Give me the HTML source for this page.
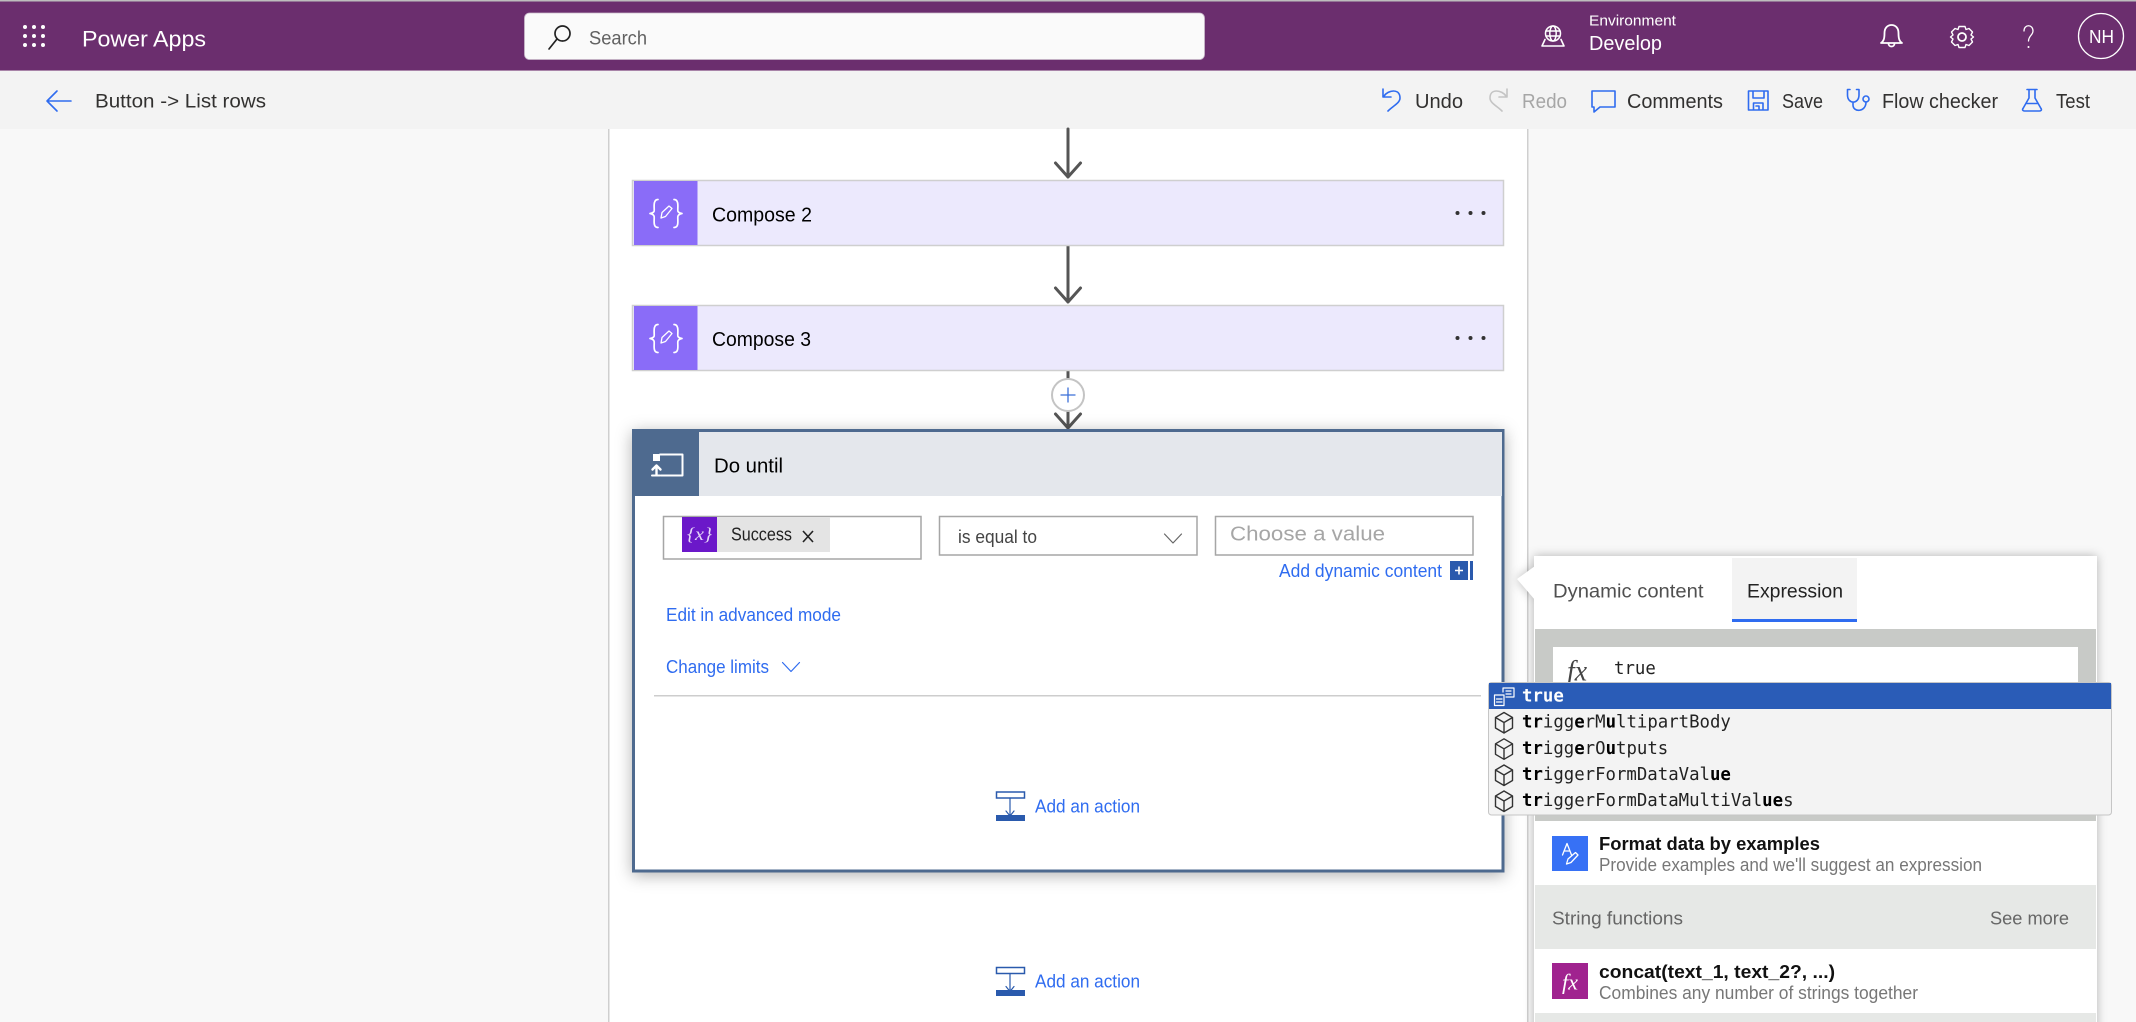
<!DOCTYPE html>
<html lang="en">
<head>
<meta charset="utf-8">
<title>Button -&gt; List rows</title>
<style>
html,body{margin:0;padding:0;width:2136px;height:1022px;overflow:hidden;background:#f8f8f8}
svg{display:block}
text{font-family:"Liberation Sans",sans-serif;dominant-baseline:central}
text.s{font-family:"Liberation Serif",serif;font-style:italic}
text.m{font-family:"DejaVu Sans Mono","Liberation Mono",monospace;font-size:17.35px;fill:#222}
.m tspan{font-weight:bold;fill:#000}
.ln{fill:none;stroke-linecap:round;stroke-linejoin:round}
</style>
</head>
<body>
<svg xmlns="http://www.w3.org/2000/svg" width="2136" height="1022" viewBox="0 0 2136 1022">
<!-- page -->
<rect width="2136" height="1022" fill="#f8f8f8"/>
<!-- canvas -->
<rect x="608" y="129" width="920" height="893" fill="#fff"/>
<rect x="608" y="129" width="1.5" height="893" fill="#cfcfcf"/>
<rect x="1527" y="129" width="1.5" height="893" fill="#cfcfcf"/>
<!-- header -->
<rect width="2136" height="71" fill="#6b2e6e"/>
<rect width="2136" height="1.5" fill="#bdbdbd"/>
<rect y="70" width="2136" height="1" fill="#a884a8"/>
<g fill="#fff">
<circle cx="25" cy="27" r="2"/><circle cx="34" cy="27" r="2"/><circle cx="43" cy="27" r="2"/>
<circle cx="25" cy="36" r="2"/><circle cx="34" cy="36" r="2"/><circle cx="43" cy="36" r="2"/>
<circle cx="25" cy="45" r="2"/><circle cx="34" cy="45" r="2"/><circle cx="43" cy="45" r="2"/>
</g>
<text x="82" y="39" font-size="22" fill="#fff" textLength="124" lengthAdjust="spacingAndGlyphs">Power Apps</text>
<rect x="524.500" y="13" width="680" height="46.500" rx="5" fill="#fafafa" stroke="#c9b9ca" stroke-width=".8"/>
<g class="ln" stroke="#222" stroke-width="1.700"><circle cx="562.500" cy="33.500" r="7.500"/><path d="M557 39L549 49"/></g>
<text x="589" y="39" font-size="19" fill="#616161" textLength="58" lengthAdjust="spacingAndGlyphs">Search</text>
<!-- environment -->
<g class="ln" stroke="#fff" stroke-width="1.500">
<circle cx="1553" cy="33.500" r="7.500"/><ellipse cx="1553" cy="33.500" rx="3.200" ry="7.500"/><path d="M1546 31H1560M1546 36H1560"/>
<path d="M1545 39.500L1542 46H1564L1561 39.500" stroke-width="1.600"/>
</g>
<text x="1589" y="21" font-size="15" fill="#fff" textLength="87" lengthAdjust="spacingAndGlyphs">Environment</text>
<text x="1589" y="44" font-size="20" fill="#fff" textLength="73" lengthAdjust="spacingAndGlyphs">Develop</text>
<g class="ln" stroke="#fff" stroke-width="1.800">
<path d="M1881 43C1884 41 1884.500 38 1884.500 33C1884.500 28 1887.500 25 1891.500 25C1895.500 25 1898.500 28 1898.500 33C1898.500 38 1899 41 1902 43Z"/><path d="M1888.500 43.500C1888.500 47.500 1894.500 47.500 1894.500 43.500"/>
<circle cx="1962" cy="37" r="4"/>
<path d="M1959 26.500H1965L1966 29.500L1969 28.500L1972.500 32L1971 35L1973.500 37L1971 39L1972.500 42L1969 45.500L1966 44.500L1965 47.500H1959L1958 44.500L1955 45.500L1951.500 42L1953 39L1950.500 37L1953 35L1951.500 32L1955 28.500L1958 29.500Z" stroke-width="1.400"/>
<path d="M2024 31C2024 24 2033 24 2033 31C2033 35 2028.500 36 2028.500 41" stroke-width="1.300"/>
</g>
<circle cx="2028.500" cy="47" r="1" fill="#fff"/>
<circle cx="2101" cy="36" r="22.500" fill="none" stroke="#fff" stroke-width="1.300"/>
<text x="2089" y="37" font-size="18" fill="#fff" textLength="25" lengthAdjust="spacingAndGlyphs">NH</text>
<!-- command bar -->
<rect y="71" width="2136" height="58" fill="#f3f3f3"/>
<g class="ln" stroke="#2f6cf0" stroke-width="1.600">
<path d="M71 101H47M57 91L47 101L57 111"/>
<path d="M1383 89V97H1391M1384 96C1388 90 1400 88 1400 98C1400 103 1393 106 1388 111"/>
<path d="M1592 91H1615V107H1600L1594 112V107H1592Z"/>
<path d="M1748.500 91H1768V110H1748.500ZM1753 91V98H1764V91M1753.500 110V103H1763V110M1756 106H1759V110"/>
<path d="M1850 89.500H1847.500V95C1847.500 104.500 1859 104.500 1859 95V89.500H1856.500M1853 102V105C1853 112.500 1866 112.500 1866 102"/><circle cx="1866" cy="99" r="3"/>
<path d="M2027 89.500H2037M2029 89.500V98L2023 108.500C2022 110 2023 111 2024.500 111H2039.500C2041 111 2042 110 2041 108.500L2035 98V89.500M2026 103.500H2038"/>
</g>
<g class="ln" stroke="#c4c4c4" stroke-width="1.600"><path d="M1507 89V97H1499M1506 96C1502 90 1490 88 1490 98C1490 103 1497 106 1502 111"/></g>
<text x="95" y="102" font-size="19" fill="#323130" textLength="171" lengthAdjust="spacingAndGlyphs">Button -&gt; List rows</text>
<text x="1415" y="102" font-size="20" fill="#323130" textLength="48" lengthAdjust="spacingAndGlyphs">Undo</text>
<text x="1522" y="102" font-size="20" fill="#a6a6a6" textLength="45" lengthAdjust="spacingAndGlyphs">Redo</text>
<text x="1627" y="102" font-size="20" fill="#323130" textLength="96" lengthAdjust="spacingAndGlyphs">Comments</text>
<text x="1782" y="102" font-size="20" fill="#323130" textLength="41" lengthAdjust="spacingAndGlyphs">Save</text>
<text x="1882" y="102" font-size="20" fill="#323130" textLength="116" lengthAdjust="spacingAndGlyphs">Flow checker</text>
<text x="2056" y="102" font-size="20" fill="#323130" textLength="34" lengthAdjust="spacingAndGlyphs">Test</text>
<!-- connectors -->
<g class="ln" stroke="#555" stroke-width="3">
<path d="M1068 129V177M1055.500 163L1068 177L1080.500 163"/>
<path d="M1068 246V302M1055.500 288L1068 302L1080.500 288"/>
<path d="M1068 371V427M1055.500 414L1068 428L1080.500 414"/>
</g>
<!-- compose 2 -->
<rect x="632.500" y="180.500" width="871" height="65" fill="#ece9fd" stroke="#cfcfcf" stroke-width="1.500"/>
<rect x="634" y="181" width="63.500" height="64" fill="#8a6cf8"/>
<text x="712" y="215" font-size="20.500" fill="#000" textLength="100" lengthAdjust="spacingAndGlyphs">Compose 2</text>
<!-- compose 3 -->
<rect x="632.500" y="305.500" width="871" height="65" fill="#ece9fd" stroke="#cfcfcf" stroke-width="1.500"/>
<rect x="634" y="306" width="63.500" height="64" fill="#8a6cf8"/>
<text x="712" y="339.500" font-size="20.500" fill="#000" textLength="99" lengthAdjust="spacingAndGlyphs">Compose 3</text>
<g class="ln" stroke="#fff" stroke-width="1.700">
<path d="M658 199.500C652 199.500 655 210 654 211.500C653 213 650 213.500 650 213.500C650 213.500 653 214 654 216C655 218 652 227.500 658 227.500"/>
<path d="M674 199.500C680 199.500 677 210 678 211.500C679 213 682 213.500 682 213.500C682 213.500 679 214 678 216C677 218 680 227.500 674 227.500"/>
<path d="M661 218L662 212.500L669 206L672 208.500L665.500 216.500Z" stroke-width="1.300"/>
<path d="M658 324.500C652 324.500 655 335 654 336.500C653 338 650 338.500 650 338.500C650 338.500 653 339 654 341C655 343 652 352.500 658 352.500"/>
<path d="M674 324.500C680 324.500 677 335 678 336.500C679 338 682 338.500 682 338.500C682 338.500 679 339 678 341C677 343 680 352.500 674 352.500"/>
<path d="M661 343L662 337.500L669 331L672 333.500L665.500 341.500Z" stroke-width="1.300"/>
</g>
<g fill="#333">
<circle cx="1457.500" cy="213" r="2"/><circle cx="1470.500" cy="213" r="2"/><circle cx="1483.500" cy="213" r="2"/>
<circle cx="1457.500" cy="338" r="2"/><circle cx="1470.500" cy="338" r="2"/><circle cx="1483.500" cy="338" r="2"/>
<circle cx="1457.500" cy="465" r="2"/><circle cx="1470.500" cy="465" r="2"/><circle cx="1483.500" cy="465" r="2"/>
</g>
<!-- do until -->
<rect x="633.500" y="430.500" width="869.500" height="440.500" fill="#fff" stroke="#4e6a8f" stroke-width="3" style="filter:drop-shadow(0 3px 8px rgba(0,0,0,.3))"/>
<rect x="635" y="432" width="867" height="64" fill="#e4e7ec"/>
<rect x="635" y="432" width="64" height="64" fill="#4e6a8f"/>
<rect x="653" y="454" width="7" height="7" fill="#fff"/>
<g class="ln" stroke="#fff" stroke-width="2"><path d="M660 454.500H682.500V475.500H661"/><path d="M656.500 475V466M652.500 469.500L656.500 465.500L660.500 469.500" stroke-width="2.400"/><path d="M652 475.500H660"/></g>
<text x="714" y="466" font-size="20.500" fill="#000" textLength="69" lengthAdjust="spacingAndGlyphs">Do until</text>
<!-- plus -->
<circle cx="1068" cy="395" r="16" fill="#fff" stroke="#c4c4c4" stroke-width="2"/>
<path d="M1068 387.500V402.500M1060.500 395H1075.500" stroke="#3b6fd8" stroke-width="1.300" fill="none"/>
<!-- condition -->
<rect x="663.500" y="516.500" width="257.500" height="42.500" fill="#fff" stroke="#a6a6a6" stroke-width="1.500"/>
<rect x="682" y="517" width="148" height="35" fill="#e4e4e4"/>
<rect x="682" y="517" width="35" height="35" fill="#6b18c9"/>
<text class="s" x="687" y="534" font-size="18" fill="#e6d8f8" textLength="25" lengthAdjust="spacingAndGlyphs">{x}</text>
<text x="731" y="534.500" font-size="18" fill="#222" textLength="61" lengthAdjust="spacingAndGlyphs">Success</text>
<path d="M803 531L813 542M813 531L803 542" stroke="#222" stroke-width="1.600" fill="none"/>
<rect x="939.500" y="516.500" width="257.500" height="38.500" fill="#fff" stroke="#a6a6a6" stroke-width="1.500"/>
<text x="958" y="537" font-size="18" fill="#444" textLength="79" lengthAdjust="spacingAndGlyphs">is equal to</text>
<path d="M1164.500 534L1173 543L1181.500 534" class="ln" stroke="#666" stroke-width="1.200"/>
<rect x="1215.500" y="516.500" width="257.500" height="38.500" fill="#fff" stroke="#a6a6a6" stroke-width="1.500"/>
<text x="1230" y="534.500" font-size="20" fill="#a6a6a6" textLength="155" lengthAdjust="spacingAndGlyphs">Choose a value</text>
<text x="1279" y="571" font-size="18" fill="#2f6cf0" textLength="163" lengthAdjust="spacingAndGlyphs">Add dynamic content</text>
<rect x="1450" y="561" width="18" height="19" fill="#2a5aad"/>
<rect x="1470" y="561" width="3" height="19" fill="#2a5aad"/>
<path d="M1459 566.500V574.500M1455 570.500H1463" stroke="#fff" stroke-width="1.600"/>
<text x="666" y="615" font-size="18" fill="#2f6cf0" textLength="175" lengthAdjust="spacingAndGlyphs">Edit in advanced mode</text>
<text x="666" y="667" font-size="18" fill="#2f6cf0" textLength="103" lengthAdjust="spacingAndGlyphs">Change limits</text>
<path d="M782.500 662.500L791 671.500L799.500 662.500" class="ln" stroke="#2f6cf0" stroke-width="1.200"/>
<rect x="654" y="695" width="827" height="1.500" fill="#cdcdcd"/>
<!-- add action 1 -->
<rect x="996.500" y="792" width="28" height="6" fill="#fff" stroke="#2a5aad" stroke-width="1.500"/>
<path d="M1010 798V817M1006 811L1010 816L1014 811" class="ln" stroke="#2a5aad" stroke-width="1.200"/>
<rect x="996" y="815" width="29" height="6" fill="#2a5aad"/>
<text x="1035" y="806.500" font-size="18" fill="#2f6cf0" textLength="105" lengthAdjust="spacingAndGlyphs">Add an action</text>
<!-- add action 2 -->
<rect x="996.500" y="967.500" width="28" height="6" fill="#fff" stroke="#2a5aad" stroke-width="1.500"/>
<path d="M1010 973.500V992M1006 986.500L1010 991.500L1014 986.500" class="ln" stroke="#2a5aad" stroke-width="1.200"/>
<rect x="996" y="990" width="29" height="6" fill="#2a5aad"/>
<text x="1035" y="981.500" font-size="18" fill="#2f6cf0" textLength="105" lengthAdjust="spacingAndGlyphs">Add an action</text>
<!-- dynamic panel -->
<g style="filter:drop-shadow(0 0 5px rgba(0,0,0,.28))">
<rect x="1534" y="556" width="563" height="480" fill="#fff"/>
<path d="M1535 566L1517 579L1535 600Z" fill="#fff"/>
</g>
<rect x="1732" y="558" width="125" height="63" fill="#f3f3f3"/>
<rect x="1732" y="619" width="125" height="3" fill="#2f6cf0"/>
<text x="1553" y="591.500" font-size="19.500" fill="#505050" textLength="150.500" lengthAdjust="spacingAndGlyphs">Dynamic content</text>
<text x="1747" y="591.500" font-size="19.500" fill="#222" textLength="96" lengthAdjust="spacingAndGlyphs">Expression</text>
<rect x="1535" y="629" width="561" height="192" fill="#c8cac7"/>
<rect x="1553" y="647" width="525" height="60" fill="#fff"/>
<text class="s" x="1567" y="671" font-size="30" fill="#444" textLength="20" lengthAdjust="spacingAndGlyphs">fx</text>
<text class="m" x="1614" y="669">true</text>
<!-- suggest popup -->
<rect x="1488.500" y="682.500" width="623" height="132.500" rx="3" fill="#f3f3f3" stroke="#c6c6c6" stroke-width="1"/>
<rect x="1489" y="683" width="622" height="26" fill="#2a5cb7"/>
<text class="m" x="1522" y="696.500" style="font-weight:bold;fill:#fff">true</text>
<text class="m" x="1522" y="722.500"><tspan>tr</tspan>igg<tspan>e</tspan>rM<tspan>u</tspan>ltipartBody</text>
<text class="m" x="1522" y="749"><tspan>tr</tspan>igg<tspan>e</tspan>rO<tspan>u</tspan>tputs</text>
<text class="m" x="1522" y="775"><tspan>tr</tspan>iggerFormDataVal<tspan>ue</tspan></text>
<text class="m" x="1522" y="801"><tspan>tr</tspan>iggerFormDataMultiVal<tspan>ue</tspan>s</text>
<g class="ln" stroke="#fff" stroke-width="1.200">
<path d="M1503 692V688H1514V697H1506"/><path d="M1506 691H1511M1506 694H1511"/>
<rect x="1494.500" y="695" width="9.500" height="10.500"/><path d="M1496.500 699H1502M1496.500 702H1502"/>
</g>
<g class="ln" stroke="#333" stroke-width="1.400">
<path d="M1504 712.500L1512.500 717.500V728L1504 733L1495.500 728V717.500ZM1495.500 717.500L1504 722.500L1512.500 717.500M1504 722.500V733"/>
<path d="M1504 738.800L1512.500 743.800V754.300L1504 759.300L1495.500 754.300V743.800ZM1495.500 743.800L1504 748.800L1512.500 743.800M1504 748.800V759.300"/>
<path d="M1504 765L1512.500 770V780.500L1504 785.500L1495.500 780.500V770ZM1495.500 770L1504 775L1512.500 770M1504 775V785.500"/>
<path d="M1504 791L1512.500 796V806.500L1504 811.500L1495.500 806.500V796ZM1495.500 796L1504 801L1512.500 796M1504 801V811.500"/>
</g>
<!-- format data -->
<rect x="1552" y="836" width="36" height="35" fill="#3771f5"/>
<path d="M1562.500 855L1567 843.500L1571.500 855M1564 851H1570" class="ln" stroke="#fff" stroke-width="1.300"/>
<path d="M1566.500 864L1568 859L1575.500 852.500L1578 855L1571 862.500Z" class="ln" stroke="#fff" stroke-width="1.300"/>
<text x="1599" y="844" font-size="18" font-weight="bold" fill="#111" textLength="221" lengthAdjust="spacingAndGlyphs">Format data by examples</text>
<text x="1599" y="865" font-size="18" fill="#777" textLength="383" lengthAdjust="spacingAndGlyphs">Provide examples and we'll suggest an expression</text>
<rect x="1535" y="885" width="561" height="64" fill="#e6e8e6"/>
<text x="1552" y="918" font-size="18.500" fill="#666" textLength="131" lengthAdjust="spacingAndGlyphs">String functions</text>
<text x="1990" y="918" font-size="18.500" fill="#666" textLength="79" lengthAdjust="spacingAndGlyphs">See more</text>
<rect x="1552" y="963" width="36" height="36" fill="#a0238f"/>
<text class="s" x="1562" y="982" font-size="22" fill="#fff" textLength="16" lengthAdjust="spacingAndGlyphs">fx</text>
<text x="1599" y="972" font-size="18" font-weight="bold" fill="#111" textLength="236" lengthAdjust="spacingAndGlyphs">concat(text_1, text_2?, ...)</text>
<text x="1599" y="993" font-size="18" fill="#777" textLength="319" lengthAdjust="spacingAndGlyphs">Combines any number of strings together</text>
<rect x="1535" y="1013" width="561" height="9" fill="#e6e8e6"/>
</svg>
</body>
</html>
